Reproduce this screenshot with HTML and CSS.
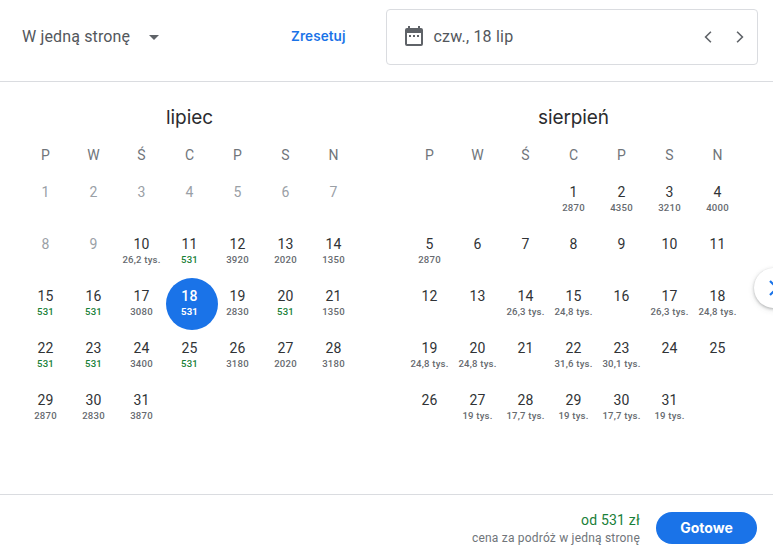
FILE: index.html
```html
<!DOCTYPE html>
<html lang="pl">
  <head>
    <meta charset="UTF-8" />
    <meta name="viewport" content="width=device-width, initial-scale=1.0" />
    <title>Wybierz datę</title>
    <link rel="stylesheet" href="styles.css">
  </head>

  <body>
    <header class="topbar">
      <div class="trip">
        <span class="trip-name">W jedną stronę</span>
        <svg class="arrow" width="10" height="5" viewBox="0 0 10 5"><path d="M0 0h10L5 5z" /></svg>
      </div>
      <button class="reset">Zresetuj</button>
      <div class="date-box">
        <svg class="cal-icon" width="24" height="24" viewBox="0 0 24 24">
          <path fill-rule="evenodd" d="M5 4h1V2h2v2h8V2h2v2h1a2 2 0 0 1 2 2v14a2 2 0 0 1-2 2H5a2 2 0 0 1-2-2V6a2 2 0 0 1 2-2zM5 9v11h14V9z" />
          <path d="M7 11h2v2H7zM11 11h2v2h-2zM15 11h2v2h-2z" />
        </svg>
        <span class="date">czw., 18 lip</span>
        <button class="step"><svg width="8" height="12" viewBox="0 0 8 12"><path d="M6.9.7 1.6 6l5.3 5.3" /></svg></button>
        <button class="step"><svg width="8" height="12" viewBox="0 0 8 12"><path d="M1.1.7 6.4 6l-5.3 5.3" /></svg></button>
      </div>
    </header>

    <main class="months">
      <section class="month">
        <h2>lipiec</h2>
        <div class="grid week"></div>
        <div class="grid days" id="july"></div>
      </section>
      <section class="month">
        <h2>sierpień</h2>
        <div class="grid week"></div>
        <div class="grid days" id="august"></div>
      </section>
      <button class="next"><svg width="12" height="18" viewBox="0 0 12 18"><path d="M2 2l7 7-7 7" /></svg></button>
    </main>

    <footer class="bottom">
      <div class="summary">
        <div class="total">od 531 zł</div>
        <div class="note">cena za podróż w jedną stronę</div>
      </div>
      <button class="done">Gotowe</button>
    </footer>

    <script>
      const july = {
        10: "26,2 tys.", 11: "531", 12: "3920", 13: "2020", 14: "1350",
        15: "531", 16: "531", 17: "3080", 18: "531", 19: "2830", 20: "531", 21: "1350",
        22: "531", 23: "531", 24: "3400", 25: "531", 26: "3180", 27: "2020", 28: "3180",
        29: "2870", 30: "2830", 31: "3870",
      };
      const august = {
        1: "2870", 2: "4350", 3: "3210", 4: "4000", 5: "2870",
        14: "26,3 tys.", 15: "24,8 tys.", 17: "26,3 tys.", 18: "24,8 tys.",
        19: "24,8 tys.", 20: "24,8 tys.", 22: "31,6 tys.", 23: "30,1 tys.",
        27: "19 tys.", 28: "17,7 tys.", 29: "19 tys.", 30: "17,7 tys.", 31: "19 tys.",
      };

      document.querySelectorAll(".week").forEach((week) => {
        for (let name of ["P", "W", "Ś", "C", "P", "S", "N"]) {
          week.innerHTML += `<span>${name}</span>`;
        }
      });

      // empty = blank cells before the 1st, past = last day that can't be picked
      const fillMonth = (id, prices, empty, past, selected) => {
        let html = "<div></div>".repeat(empty);
        for (let day = 1; day <= 31; day++) {
          let cls = "day";
          if (day <= past) cls += " past";
          if (prices[day] == "531") cls += " cheap";
          if (day == selected) cls += " selected";
          html += `<div class="${cls}"><span class="num">${day}</span>`;
          if (prices[day]) html += `<span class="price">${prices[day]}</span>`;
          html += "</div>";
        }
        document.getElementById(id).innerHTML = html;
      };

      fillMonth("july", july, 0, 9, 18);
      fillMonth("august", august, 3, 0, 0);
    </script>
  </body>
</html>
```
FILE: styles.css
```css
* {
  box-sizing: border-box;
}

body {
  margin: 0;
  height: 555px;
  display: flex;
  flex-direction: column;
  overflow: hidden;
  background: #fff;
  color: #3c4043;
  font-family: Roboto, "Liberation Sans", sans-serif;
}

button {
  border: none;
  padding: 0;
  background: none;
  font-family: Inter, "Liberation Sans", sans-serif;
}

svg {
  display: block;
}

.topbar {
  height: 82px;
  flex: none;
  display: flex;
  align-items: flex-start;
  padding: 9px 15px 0 22px;
  border-bottom: 1px solid #dadce0;
}

.trip {
  height: 54px;
  display: flex;
  align-items: center;
  gap: 18.5px;
  width: 269px;
  font-size: 16px;
  color: #5f6368;
}

.trip-name {
  color: #53575c;
  letter-spacing: 0.14px;
  white-space: nowrap;
}

.arrow {
  fill: #5f6368;
  margin-top: 3px;
}

.reset {
  height: 54px;
  width: 95px;
  text-align: left;
  font-size: 13.5px;
  font-weight: 600;
  letter-spacing: 0.1px;
  color: #1a73e8;
}

.date-box {
  flex: 1;
  height: 56px;
  display: flex;
  align-items: center;
  padding: 0 1px 0 15px;
  border: 1px solid #dadce0;
  border-radius: 4px;
}

.cal-icon {
  fill: #5f6368;
  margin-bottom: 2px;
}

.date {
  flex: 1;
  margin: 0 0 2px 7.5px;
  font-size: 16px;
  letter-spacing: 0.2px;
  color: #53575c;
}

.step {
  width: 32px;
  height: 32px;
  display: flex;
  align-items: center;
  justify-content: center;
}

.step path {
  fill: none;
  stroke: #5f6368;
  stroke-width: 1.6;
}

.months {
  flex: 1;
  position: relative;
  display: flex;
  gap: 48px;
  padding-left: 21.5px;
}

.month {
  width: 336px;
  padding-top: 24px;
}

.month h2 {
  margin: 0;
  line-height: 24px;
  text-align: center;
  font-family: Inter, "Liberation Sans", sans-serif;
  font-size: 19px;
  font-weight: 400;
  letter-spacing: -0.1px;
  color: #2b2c2f;
}

.grid {
  display: grid;
  grid-template-columns: repeat(7, 48px);
  text-align: center;
}

.week {
  height: 44px;
  padding-top: 15px;
  line-height: 20px;
  font-size: 14px;
  color: #70757a;
}

.days {
  grid-auto-rows: 52px;
}

.day {
  display: flex;
  flex-direction: column;
  align-items: center;
  padding-top: 9px;
  color: #303336;
}

.num {
  line-height: 18px;
  font-size: 14px;
  letter-spacing: 0.2px;
}

.price {
  line-height: 14px;
  font-size: 9.6px;
  font-weight: 500;
  letter-spacing: 0.2px;
  white-space: nowrap;
  color: #666a6f;
}

.past {
  color: #9aa0a6;
}

.cheap .price {
  color: #188038;
}

/* circle is a bit wider than the column */
.selected {
  width: 52px;
  height: 52px;
  margin-left: 0.5px;
  padding-right: 5px;
  border-radius: 50%;
  background: #1a73e8;
  color: #fff;
  font-weight: 500;
}

.selected .price {
  color: #fff;
  font-weight: 700;
}

.next {
  position: absolute;
  top: 186px;
  right: -21px;
  width: 40px;
  height: 40px;
  padding-left: 14px;
  border-radius: 50%;
  background: #fff;
  box-shadow: 0 1px 3px rgba(60, 64, 67, 0.35), 0 2px 6px rgba(60, 64, 67, 0.12);
}

.next path {
  fill: none;
  stroke: #1a73e8;
  stroke-width: 2.2;
}

.bottom {
  flex: none;
  height: 61px;
  display: flex;
  justify-content: flex-end;
  gap: 16px;
  padding: 17px 16px 0 0;
  border-top: 1px solid #dadce0;
}

.summary {
  text-align: right;
}

.total {
  line-height: 17px;
  font-size: 14px;
  letter-spacing: 0.2px;
  color: #188038;
}

.note {
  line-height: 18px;
  font-size: 12px;
  letter-spacing: 0.2px;
  color: #70757a;
}

.done {
  width: 101px;
  height: 32px;
  padding-bottom: 1px;
  border-radius: 16px;
  background: #1a73e8;
  font-size: 14px;
  font-weight: 700;
  color: #fff;
}
```
